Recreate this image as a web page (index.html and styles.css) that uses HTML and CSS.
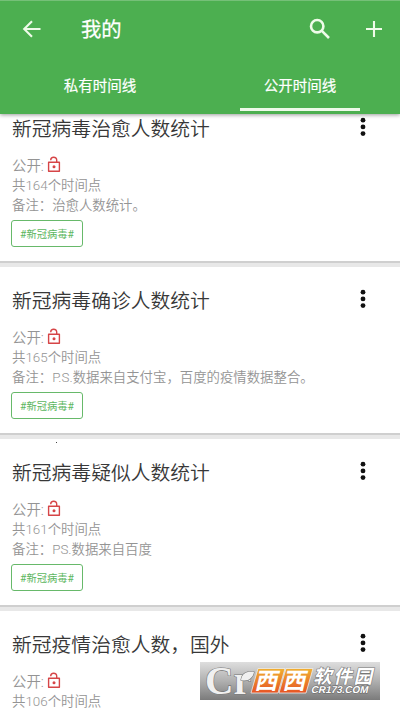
FILE: index.html
```
<!DOCTYPE html>
<html lang="zh-CN">
<head>
<meta charset="utf-8">
<title>我的</title>
<link rel="stylesheet" href="styles.css">
</head>
<body>
<svg width="0" height="0" class="defs" aria-hidden="true">
  <symbol id="lock" viewBox="0 0 14 17">
    <path d="M1.6 6.3H12.4V15.3H1.6ZM3.7 4.2C3.7 0.3 9.7 0.2 9.7 4V6" fill="none" stroke="currentColor" stroke-width="1.4" stroke-linejoin="round"/>
    <circle cx="7" cy="10.8" r="1.5" fill="currentColor"/>
  </symbol>
  <symbol id="more" viewBox="0 0 6 20">
    <circle cx="3" cy="3.2" r="2.4"/><circle cx="3" cy="9.9" r="2.4"/><circle cx="3" cy="16.6" r="2.4"/>
  </symbol>
</svg>
<div class="screen">
  <header class="header">
    <div class="bar">
      <svg class="back" width="20" height="20" viewBox="0 0 20 20"><path d="M18.5 10H2.5M10 2.2L2.2 10L10 17.8" /></svg>
      <h1 class="heading">我的</h1>
      <svg class="search" width="22" height="22" viewBox="0 0 22 22"><circle cx="8.2" cy="8.2" r="6.2"/><path d="M12.6 12.6L20 20"/></svg>
      <svg class="add" width="18" height="18" viewBox="0 0 18 18"><path d="M1 9H17M9 1V17"/></svg>
    </div>
    <nav class="tabs">
      <div class="tab">私有时间线</div>
      <div class="tab active">公开时间线</div>
    </nav>
  </header>
  <main class="list">
    <article class="card">
      <div class="top"><h2 class="title">新冠病毒治愈人数统计</h2><svg class="more"><use href="#more"/></svg></div>
      <div class="access">公开:<svg class="lock"><use href="#lock"/></svg></div>
      <p class="line">共<span class="latin">164</span>个时间点</p>
      <p class="line">备注：治愈人数统计。</p>
      <span class="tag">#新冠病毒#</span>
    </article>
    <article class="card">
      <div class="top"><h2 class="title">新冠病毒确诊人数统计</h2><svg class="more"><use href="#more"/></svg></div>
      <div class="access">公开:<svg class="lock"><use href="#lock"/></svg></div>
      <p class="line">共<span class="latin">165</span>个时间点</p>
      <p class="line">备注：<span class="latin">P.S.</span>数据来自支付宝，百度的疫情数据整合。</p>
      <span class="tag">#新冠病毒#</span>
    </article>
    <article class="card">
      <i class="speck"></i>
      <div class="top"><h2 class="title">新冠病毒疑似人数统计</h2><svg class="more"><use href="#more"/></svg></div>
      <div class="access">公开:<svg class="lock"><use href="#lock"/></svg></div>
      <p class="line">共<span class="latin">161</span>个时间点</p>
      <p class="line">备注：<span class="latin">PS.</span>数据来自百度</p>
      <span class="tag">#新冠病毒#</span>
    </article>
    <article class="card">
      <div class="top"><h2 class="title">新冠疫情治愈人数，国外</h2><svg class="more"><use href="#more"/></svg></div>
      <div class="access">公开:<svg class="lock"><use href="#lock"/></svg></div>
      <p class="line">共<span class="latin">106</span>个时间点</p>
    </article>
  </main>
  <div class="watermark">
    <svg width="180" height="38" viewBox="0 0 180 38">
      <defs>
        <linearGradient id="orange" x1="0" y1="0" x2="0" y2="1"><stop offset="0" stop-color="#f0b030"/><stop offset="1" stop-color="#e65325"/></linearGradient>
      </defs>
      <g class="mark">
        <text x="5" y="31.5" textLength="46" lengthAdjust="spacingAndGlyphs">Cr</text>
        <path d="M41 18C42 11 47 9 54 10C53 16 48 20 41 18Z"/>
      </g>
      <path d="M58 6.5H85L78 31H51ZM86 6.5H113L106 31H79Z" fill="url(#orange)" stroke="#eee" stroke-width=".8"/>
      <g transform="skewX(-13)">
        <text class="xi" x="60.5" y="27" textLength="23">西</text>
        <text class="xi" x="88.5" y="27" textLength="23">西</text>
        <text class="soft" x="118" y="20.5" textLength="59">软件园</text>
        <text class="site" x="118" y="31" textLength="57" lengthAdjust="spacingAndGlyphs">CR173.COM</text>
      </g>
    </svg>
  </div>
</div>
</body>
</html>
```
FILE: styles.css
```
* { box-sizing: border-box; }
body {
  margin: 0;
  background: #e8e8e8;
  font-family: Roboto, "Noto Sans CJK SC", sans-serif;
}
h1, h2, p { margin: 0; font-weight: 400; }
svg { display: block; flex: none; }
.defs { position: absolute; }
.screen {
  position: relative;
  display: flex;
  flex-direction: column;
  width: 400px;
  height: 710px;
  overflow: hidden;
}
.header {
  position: relative;
  z-index: 1;
  flex: none;
  height: 114px;
  background: #4caf50;
  border-top: 1px solid #75c078;
  box-shadow: 0 1px 4px rgba(0, 0, 0, .4);
  color: #fff;
}
.bar {
  display: flex;
  align-items: center;
  height: 56px;
  padding: 0 17px 0 22px;
}
.bar svg { fill: none; stroke: #effbe9; stroke-width: 2.1; }
.heading { margin: 2px auto 0 39px; font-size: 20.3px; font-weight: 400; -webkit-text-stroke: .25px #fff; line-height: 30px; }
.bar .search { margin-right: 34px; stroke-width: 2.6; }
.tabs { display: flex; height: 57px; }
.tab { position: relative; width: 200px; height: 57px; text-align: center; font-size: 14.5px; font-weight: 400; -webkit-text-stroke: .2px #fff; line-height: 60px; }
.tab.active::after {
  content: "";
  position: absolute;
  left: 40px;
  bottom: 3px;
  width: 120px;
  height: 3.5px;
  background: #edfae9;
}
.list { flex: 1; min-height: 0; margin-top: -19px; }
.card {
  position: relative;
  height: 166px;
  margin-bottom: 6px;
  padding: 16px 0 0 12px;
  background: #fff;
  box-shadow: 0 2px 0 #cfcfcf;
}
.top { display: flex; height: 43px; padding-right: 34.5px; justify-content: space-between; }
.title { font-size: 19.8px; font-weight: 350; line-height: 37px; color: #383838; }
.more { width: 6px; height: 20px; margin-top: 6px; fill: #111; }
.access { display: flex; align-items: center; height: 21px; padding-bottom: 1px; font-size: 14.4px; font-weight: 350; color: #949494; }
.lock { width: 14px; height: 17px; margin: 0 0 0 3px; color: #d64547; }
.line { height: 20px; font-size: 13.4px; font-weight: 350; line-height: 21px; color: #949494; white-space: nowrap; }
.latin { font-weight: 300; }
.tag {
  display: flex;
  align-items: center;
  justify-content: center;
  width: 72px;
  height: 27px;
  margin: 5px 0 0 -1px;
  border: 1px solid #67b96a;
  border-radius: 3px;
  color: #5cb660;
  font-size: 10.3px;
}
.speck { position: absolute; left: 56px; top: 3px; width: 1px; height: 1px; background: #444; }
.watermark {
  position: absolute;
  z-index: 2;
  left: 200px;
  top: 662px;
  width: 180px;
  height: 38px;
  background: linear-gradient(#dedede, #b0b0b0 50%, #7b7b7b);
}
.mark { fill: #f0f0f0; stroke: #777; stroke-width: 1.2; paint-order: stroke; font-family: "Liberation Serif", serif; font-size: 41px; font-weight: 700; }
.xi, .soft { font-family: "Noto Sans CJK SC", sans-serif; font-weight: 700; fill: #fff; }
.xi { font-size: 23px; }
.soft { font-size: 18.5px; stroke: #777; stroke-width: 1.2; paint-order: stroke; }
.site { font-family: "Liberation Sans", sans-serif; font-size: 10px; font-weight: 700; fill: #fff; stroke: #666; stroke-width: 1; paint-order: stroke; }
```
